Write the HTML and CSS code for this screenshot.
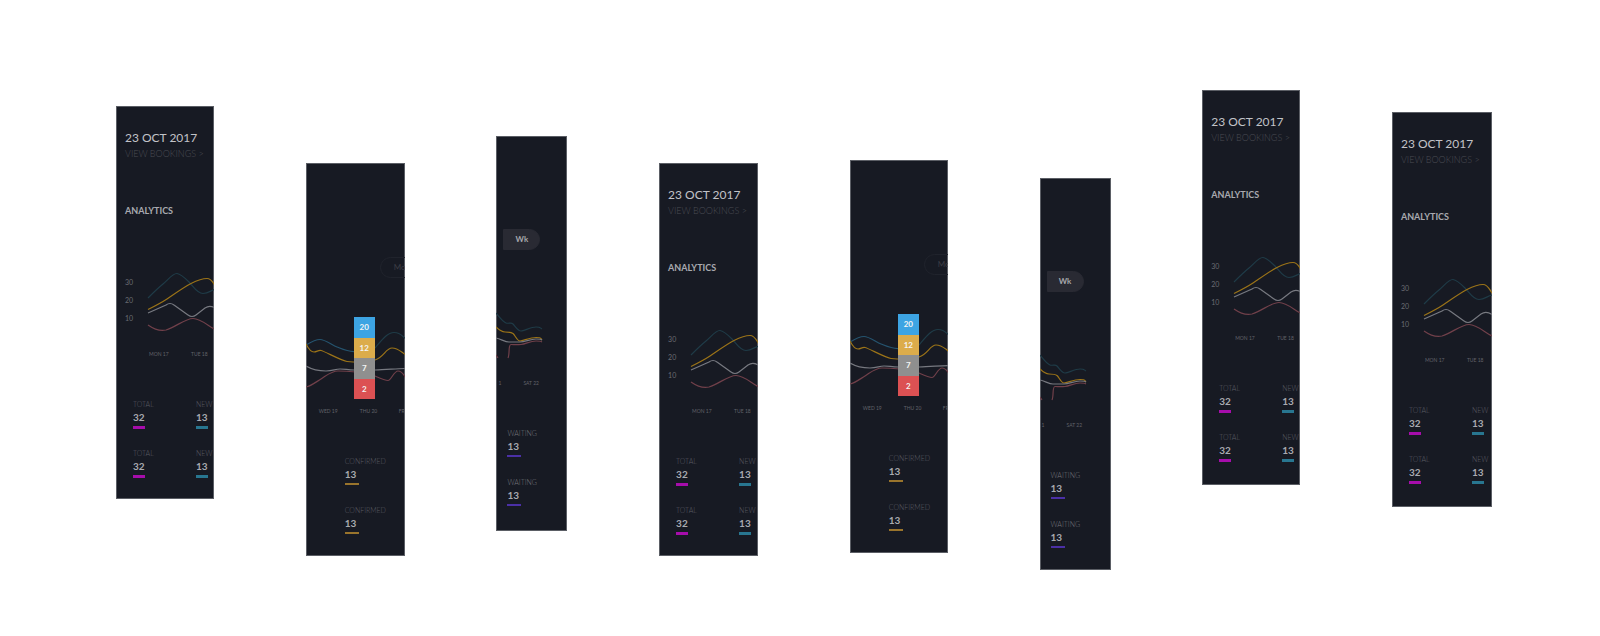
FILE: index.html
```html
<!DOCTYPE html>
<html lang="en">
<head>
<meta charset="utf-8">
<meta name="viewport" content="width=device-width, initial-scale=1">
<title>Bookings analytics</title>
<link rel="stylesheet" href="styles.css">
</head>
<body>
<svg class="defs" aria-hidden="true">
  <symbol id="chart-start" viewBox="0 0 100 143">
    <path class="line teal" d="M32 75 C37 70 42 65 47 61 S57 50 61 50.500 S69 55 73 59 S81 70.500 87 70.500 S95 67 100 66"/>
    <path class="line gold" d="M32 86.500 C39 83 45 80 51 76 S68 64 75 60.500 S86 55.500 91 55.500 S97 60 100 64"/>
    <path class="line grey" d="M32 90 L50 82 Q54 79 58 82 L72 92 Q76 95 80 92 L89 85 Q94 81.500 100 85.500"/>
    <path class="line red" d="M32 102 Q42 109 50 107 C60 104 69 95.500 77 95.500 S92 103 100 107"/>
  </symbol>
  <symbol id="chart-middle" viewBox="0 0 100 143">
    <path class="line blue" d="M0 65 C5 62 9 59.500 14 59.500 S26 65 31 67 S42 72 49 71.500"/>
    <path class="line teal" d="M69 68 C75 61 81 52.500 88 52.500 S96 56 100 59"/>
    <path class="line gold" d="M0 64 C3 70 5 72 8 72 S12 70 15 70.500 S36 81 41 81.500 S60 83 69 80 S80 68 86 68 S95 72 100 75"/>
    <path class="line grey" d="M0 86 C7 90 13 91 20 91 S29 89 34 89 S42 90 48 90 L69 90 C80 90 90 88.500 100 88.500"/>
    <path class="line red" d="M0 107 C5 106 10 102 15 99 S25 91 32 91 S60 92 69 96 S79 100.500 82 100.500 S88 91 92 91 S97 94 100 98"/>
  </symbol>
  <symbol id="chart-end" viewBox="0 0 100 143">
    <path class="line teal" d="M0 61 C4 66 7 70 10 71 S15 70 17 72 S22 79 25 79 S35 75 40 75 S44 76 46 77"/>
    <path class="line gold" d="M0 75 C3 78 6 80 9 80 S15 80 17 81.500 S21 89 24 89 S34 85.500 40 85.500 S44 86 46 88"/>
    <path class="line grey" d="M0 86 C5 87 9 90 13 90 S19 90 24 90 S34 87 40 87 S44 87 46 88"/>
    <path class="line red" d="M0 103 L2 106 M12 106 C14 102 12 92.500 15 92.500 S20 93 25 92.500 S34 89 40 89 S44 89 46 90"/>
  </symbol>
</svg>

<main class="gallery">
  <section class="panel wide p1">
    <header class="head"><h2 class="date">23 OCT 2017</h2><a class="more" href="#">VIEW BOOKINGS &gt;</a></header>
    <div class="bar"><h3 class="title">ANALYTICS</h3></div>
    <div class="chart"><svg class="plot"><use href="#chart-start"/></svg>
      <div class="axis"><span>30</span><span>20</span><span>10</span></div>
      <div class="days start"><span>MON 17</span><span>TUE 18</span></div>
    </div>
    <div class="stats two">
      <div class="stat total"><span>TOTAL</span><b>32</b></div><div class="stat new"><span>NEW</span><b>13</b></div>
      <div class="stat total"><span>TOTAL</span><b>32</b></div><div class="stat new"><span>NEW</span><b>13</b></div>
    </div>
  </section>

  <section class="panel p2">
    <div class="head"></div>
    <div class="bar"><button class="pill month" type="button">Mo</button></div>
    <div class="chart"><svg class="plot"><use href="#chart-middle"/></svg>
      <div class="days middle"><span>WED 19</span><span>THU 20</span><span>FR</span></div>
      <div class="tip"><span class="t-blue">20</span><span class="t-gold">12</span><span class="t-grey">7</span><span class="t-red">2</span></div>
    </div>
    <div class="stats confirmed">
      <div class="stat"><span>CONFIRMED</span><b>13</b></div>
      <div class="stat"><span>CONFIRMED</span><b>13</b></div>
    </div>
  </section>

  <section class="panel narrow p3">
    <div class="head"></div>
    <div class="bar"><button class="pill week" type="button">Wk</button></div>
    <div class="chart"><svg class="plot"><use href="#chart-end"/></svg>
      <div class="days end"><span>1</span><span>SAT 22</span></div>
    </div>
    <div class="stats waiting">
      <div class="stat"><span>WAITING</span><b>13</b></div>
      <div class="stat"><span>WAITING</span><b>13</b></div>
    </div>
  </section>

  <section class="panel p4">
    <header class="head"><h2 class="date">23 OCT 2017</h2><a class="more" href="#">VIEW BOOKINGS &gt;</a></header>
    <div class="bar"><h3 class="title">ANALYTICS</h3></div>
    <div class="chart"><svg class="plot"><use href="#chart-start"/></svg>
      <div class="axis"><span>30</span><span>20</span><span>10</span></div>
      <div class="days start"><span>MON 17</span><span>TUE 18</span></div>
    </div>
    <div class="stats two">
      <div class="stat total"><span>TOTAL</span><b>32</b></div><div class="stat new"><span>NEW</span><b>13</b></div>
      <div class="stat total"><span>TOTAL</span><b>32</b></div><div class="stat new"><span>NEW</span><b>13</b></div>
    </div>
  </section>

  <section class="panel p5">
    <div class="head"></div>
    <div class="bar"><button class="pill month" type="button">Mo</button></div>
    <div class="chart"><svg class="plot"><use href="#chart-middle"/></svg>
      <div class="days middle"><span>WED 19</span><span>THU 20</span><span>FR</span></div>
      <div class="tip"><span class="t-blue">20</span><span class="t-gold">12</span><span class="t-grey">7</span><span class="t-red">2</span></div>
    </div>
    <div class="stats confirmed">
      <div class="stat"><span>CONFIRMED</span><b>13</b></div>
      <div class="stat"><span>CONFIRMED</span><b>13</b></div>
    </div>
  </section>

  <section class="panel narrow p6">
    <div class="head"></div>
    <div class="bar"><button class="pill week" type="button">Wk</button></div>
    <div class="chart"><svg class="plot"><use href="#chart-end"/></svg>
      <div class="days end"><span>1</span><span>SAT 22</span></div>
    </div>
    <div class="stats waiting">
      <div class="stat"><span>WAITING</span><b>13</b></div>
      <div class="stat"><span>WAITING</span><b>13</b></div>
    </div>
  </section>

  <section class="panel p7">
    <header class="head"><h2 class="date">23 OCT 2017</h2><a class="more" href="#">VIEW BOOKINGS &gt;</a></header>
    <div class="bar"><h3 class="title">ANALYTICS</h3></div>
    <div class="chart"><svg class="plot"><use href="#chart-start"/></svg>
      <div class="axis"><span>30</span><span>20</span><span>10</span></div>
      <div class="days start"><span>MON 17</span><span>TUE 18</span></div>
    </div>
    <div class="stats two">
      <div class="stat total"><span>TOTAL</span><b>32</b></div><div class="stat new"><span>NEW</span><b>13</b></div>
      <div class="stat total"><span>TOTAL</span><b>32</b></div><div class="stat new"><span>NEW</span><b>13</b></div>
    </div>
  </section>

  <section class="panel p8">
    <header class="head"><h2 class="date">23 OCT 2017</h2><a class="more" href="#">VIEW BOOKINGS &gt;</a></header>
    <div class="bar"><h3 class="title">ANALYTICS</h3></div>
    <div class="chart"><svg class="plot"><use href="#chart-start"/></svg>
      <div class="axis"><span>30</span><span>20</span><span>10</span></div>
      <div class="days start"><span>MON 17</span><span>TUE 18</span></div>
    </div>
    <div class="stats two">
      <div class="stat total"><span>TOTAL</span><b>32</b></div><div class="stat new"><span>NEW</span><b>13</b></div>
      <div class="stat total"><span>TOTAL</span><b>32</b></div><div class="stat new"><span>NEW</span><b>13</b></div>
    </div>
  </section>
</main>
</body>
</html>
```
FILE: styles.css
```css
* { box-sizing: border-box; }
body { margin: 0; background: #fff; font-family: Lato, "Open Sans", sans-serif; }
.defs { display: block; width: 0; height: 0; }

/* Staggered row of panels */
.gallery {
  display: flex;
  justify-content: space-between;
  align-items: flex-start;
  padding: 0 108px 0 116px;
}
.panel {
  flex: none;
  width: 98px;
  padding: 24px 0 21px;
  overflow: hidden;
  background: #171a23;
  box-shadow: inset 0 0 0 1px #5b5e65;
}
.panel.narrow { width: 71px; padding-top: 23px; }
.p1 { margin-top: 106px; }
.p2 { margin-top: 163px; width: 99px; }
.p3 { margin-top: 136px; padding-bottom: 24px; }
.p4 { margin-top: 163px; width: 99px; }
.p5 { margin-top: 160px; }
.p6 { margin-top: 178px; }
.p7 { margin-top: 90px; padding-bottom: 23px; }
.p8 { margin-top: 112px; width: 100px; padding-bottom: 23px; }

.head { height: 69px; padding-left: 9px; white-space: nowrap; }
.date { margin: 0; font-size: 12px; line-height: 16px; font-weight: 400; color: #c2c3c8; }
.more { display: block; font-size: 9px; line-height: 16px; font-weight: 300; color: #4b4c53; text-decoration: none; }
.bar { display: flex; align-items: center; height: 24px; }
.title { margin: 0 0 0 9px; font-size: 9px; line-height: 12px; font-weight: 700; color: #a9aab0; }

.pill {
  flex: none;
  height: 21px;
  margin-bottom: 2px;
  padding: 0 13px;
  border: 1px solid #20232c;
  background: none;
  font: 8px/18px Lato, sans-serif;
  color: #3d3e45;
}
.month { width: 48px; margin-left: 74px; border-radius: 11px 0 0 11px; text-align: left; }
.week { width: 37px; margin-left: 7px; padding: 0; border-color: #292a33; border-radius: 0 11px 11px 0; background: #292a33; color: #a5a6ab; font-weight: 700; }

.chart { position: relative; height: 143px; }
.plot { display: block; width: 100px; height: 143px; }
.line { fill: none; stroke-width: 1.2; }
.teal { stroke: #1f3b47; }
.blue { stroke: #25546f; }
.gold { stroke: #9c7418; }
.grey { stroke: #777980; }
.red { stroke: #71404a; }

/* Labels laid over the plot */
.axis {
  position: absolute;
  top: 50px;
  left: 9px;
  display: grid;
  font-size: 7px;
  line-height: 18px;
  color: #6a6b72;
}
.days {
  position: absolute;
  top: 127px;
  left: 0;
  display: grid;
  font-size: 5px;
  line-height: 8px;
  color: #62636a;
  white-space: nowrap;
}
.days.start { grid-template-columns: 42px auto; padding-left: 33px; }
.days.middle { grid-template-columns: 41px 39px auto; padding-left: 13px; }
.days.end { grid-template-columns: 25px auto; padding-left: 2px; }

.tip {
  position: absolute;
  top: 37px;
  left: 48px;
  display: grid;
  grid-template-rows: repeat(4, 1fr);
  width: 21px;
  height: 82px;
  font-size: 8px;
  font-weight: 700;
  color: #f4f4f4;
}
.tip span { display: grid; place-items: center; }
.t-blue { background: #3da4e3; }
.t-gold { background: #dcac4b; }
.t-grey { background: #8f8f8f; }
.t-red { background: #dc5153; }

.stats { display: grid; gap: 20px 0; padding-top: 34px; padding-left: 17px; }
.two { grid-template-columns: 63px 1fr; }
.confirmed { padding-left: 39px; }
.waiting { padding-left: 11px; }
.stat { display: flex; flex-direction: column; align-items: flex-start; }
.stat span { font-size: 7px; line-height: 8px; font-weight: 300; color: #5b5c63; white-space: nowrap; }
.stat b { margin-top: 2px; font-size: 10px; line-height: 14px; color: #a9aab0; }
.stat::after { content: ""; width: 12px; height: 3px; margin-top: 2px; }
.total::after { background: #a60dab; }
.new::after { background: #287690; }
.confirmed .stat::after { width: 14px; height: 2px; margin-bottom: 1px; background: #99742c; }
.waiting .stat::after { width: 14px; height: 2px; margin-bottom: 1px; background: #4b30a6; }
.waiting .stat span { color: #74757b; }
```
